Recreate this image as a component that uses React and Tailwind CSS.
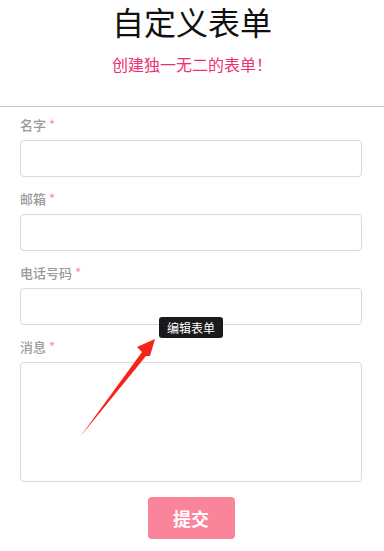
const fields = [
  { label: "名字" },
  { label: "邮箱" },
  { label: "电话号码" },
  { label: "消息", area: true },
];

const Arrow = () => (
  <svg className="absolute left-0 top-0" width="384" height="551" viewBox="0 0 384 551">
    <polygon
      points="80,437 142,352 137,347 155,339 150,356 146,356"
      fill="#f7231a"
    />
  </svg>
);

export default function App() {
  return (
    <main
      className="relative w-[384px] h-[551px] bg-white overflow-hidden"
      style={{ fontFamily: '"Noto Sans CJK SC", "Noto Sans", sans-serif' }}
    >
      <header className="text-center">
        <h1 className="text-[32px] leading-[42px] text-[#111]">自定义表单</h1>
        <p className="mt-[10px] text-[16px] leading-[24px] text-[#f0306b]">创建独一无二的表单！</p>
      </header>

      <div className="mt-[30px] border-t border-[#c8c8c8]" />

      <form className="pl-5 pt-[8px]">
        {fields.map((f, i) => (
          <div key={i} className={i > 0 ? "mt-[12px]" : ""}>
            <label className="block text-[13px] leading-[20px] font-medium text-[#9a9a9a] mb-[5px]">
              {f.label} <span className="text-[#f59aae]">*</span>
            </label>
            {f.area ? (
              <textarea className="block w-[342px] h-[120px] border border-[#d9d9d9] rounded-[4px] resize-none" />
            ) : (
              <input className="block w-[342px] h-[37px] border border-[#d9d9d9] rounded-[4px]" />
            )}
          </div>
        ))}
        <div className="w-[342px] flex justify-center mt-[15px]">
          <button
            type="button"
            className="w-[87px] h-[42px] rounded-[4px] bg-[#fa8499] text-white text-[18px] font-bold"
          >
            提交
          </button>
        </div>
      </form>

      <div className="absolute left-[159px] top-[317px] w-[64px] h-[21px] rounded-[3px] bg-[#1a1a1a] text-white text-[12px] leading-[21px] text-center">
        编辑表单
      </div>
      <Arrow />
    </main>
  );
}
